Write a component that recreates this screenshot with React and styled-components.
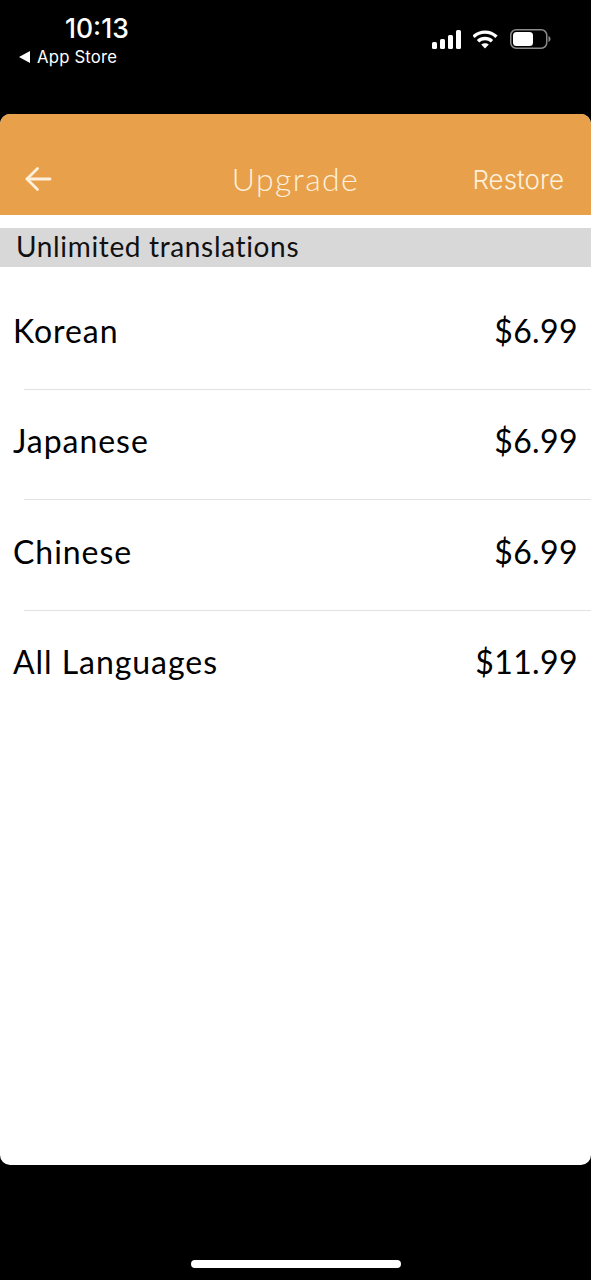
import React from "react";
import styled, { createGlobalStyle } from "styled-components";

const GlobalStyle = createGlobalStyle`
  html, body {
    margin: 0;
    padding: 0;
    background: #000;
  }
  * {
    box-sizing: border-box;
  }
`;

const Screen = styled.div`
  width: 591px;
  height: 1280px;
  background: #000;
  display: flex;
  flex-direction: column;
  overflow: hidden;
`;

const StatusBar = styled.div`
  height: 114px;
  flex: none;
  display: flex;
  justify-content: space-between;
  align-items: flex-start;
  color: #fff;
  font-family: "Inter", "Liberation Sans", sans-serif;
`;

const StatusLeft = styled.div`
  display: flex;
  flex-direction: column;
  align-items: flex-start;
  padding: 13px 0 0 19px;
`;

const Time = styled.div`
  font-size: 26.500px;
  font-weight: 500;
  line-height: 30px;
  margin-left: 46px;
`;

const BackToStore = styled.div`
  display: flex;
  align-items: center;
  gap: 7px;
  font-size: 16.700px;
  line-height: 20px;
  margin-top: 4px;
  letter-spacing: 0.2px;
`;

const StatusIcons = styled.div`
  display: flex;
  align-items: center;
  gap: 11px;
  padding: 29px 40px 0 0;
`;

const Sheet = styled.div`
  height: 1051px;
  flex: none;
  background: #fff;
  border-radius: 10px;
  overflow: hidden;
`;

const Header = styled.div`
  height: 101px;
  background: #e8a04b;
  color: #fdf0dc;
  display: grid;
  grid-template-columns: 1fr auto 1fr;
  align-items: center;
  padding: 28px 27px 0 24px;
`;

const BackButton = styled.button`
  display: flex;
  padding: 0;
  border: 0;
  background: none;
  color: inherit;
`;

const Title = styled.div`
  font-family: "Lato", "Liberation Sans", sans-serif;
  font-weight: 300;
  font-size: 32px;
  letter-spacing: 1.400px;
  margin: -1px 0 0 3px;
`;

const RestoreButton = styled.button`
  justify-self: end;
  padding: 0;
  border: 0;
  background: none;
  color: inherit;
  font-family: "Inter", "Liberation Sans", sans-serif;
  font-size: 26px;
  font-weight: 300;
  margin-top: 2px;
`;

const SectionTitle = styled.div`
  height: 39px;
  margin-top: 13px;
  padding-left: 16px;
  background: #d8d8d8;
  color: #111;
  font-family: "Lato", "Liberation Sans", sans-serif;
  font-size: 28px;
  letter-spacing: 0.650px;
  line-height: 37px;
`;

const List = styled.div`
  padding-top: 12px;
`;

const Row = styled.div`
  height: 110.500px;
  display: flex;
  justify-content: space-between;
  align-items: center;
  padding: 0 13px 8px;
  position: relative;
  color: #000;
  font-family: "Lato", "Liberation Sans", sans-serif;
  font-size: 32px;
  letter-spacing: 0.950px;

  &:not(:last-child)::after {
    content: "";
    position: absolute;
    left: 24px;
    right: 0;
    bottom: 0;
    height: 1px;
    background: #e2e2e2;
  }
`;

const Price = styled.span`
  letter-spacing: 0.400px;
`;

const HomeArea = styled.div`
  flex: 1;
  display: flex;
  justify-content: center;
  align-items: flex-end;
  padding-bottom: 12px;
`;

const HomeIndicator = styled.div`
  width: 210px;
  height: 8px;
  border-radius: 4px;
  background: #fff;
`;

const SignalIcon = () => (
  <svg width="30" height="19" viewBox="0 0 30 19" fill="#fff">
    <rect x="0" y="12" width="5" height="7" rx="1.500" />
    <rect x="8" y="9" width="5" height="10" rx="1.500" />
    <rect x="16" y="5" width="5" height="14" rx="1.500" />
    <rect x="24" y="0" width="5" height="19" rx="1.500" />
  </svg>
);

const WifiIcon = () => (
  <svg width="26" height="19" viewBox="0 0 26 19" fill="none" stroke="#fff" strokeWidth="3.400">
    <path d="M0.500 6.800C7 .6 17 .6 23.500 6.800" />
    <path d="M5 11.200c4-3.700 10-3.700 14 0" />
    <path d="M12 18.500l-3.800-4c2.200-1.800 5.400-1.800 7.600 0z" fill="#fff" stroke="none" />
  </svg>
);

const BatteryIcon = () => (
  <svg width="41" height="20" viewBox="0 0 41 20">
    <rect x="0.750" y="0.750" width="36" height="18.500" rx="5.500" fill="none" stroke="#8a8a8a" strokeWidth="1.500" />
    <rect x="3" y="3" width="20" height="14" rx="3.500" fill="#fff" />
    <path d="M38.500 7v6c1.300-.5 2-1.700 2-3s-.7-2.500-2-3z" fill="#8a8a8a" />
  </svg>
);

const ArrowIcon = () => (
  <svg width="28" height="26" viewBox="0 0 28 26" fill="none" stroke="currentColor" strokeWidth="2.800" strokeLinecap="round" strokeLinejoin="round">
    <path d="M26 13H3" />
    <path d="M13.500 2.500L3 13l10.500 10.500" />
  </svg>
);

const products = [
  { name: "Korean", price: "$6.99" },
  { name: "Japanese", price: "$6.99" },
  { name: "Chinese", price: "$6.99" },
  { name: "All Languages", price: "$11.99" },
];

function App() {
  return (
    <Screen>
      <GlobalStyle />
      <StatusBar>
        <StatusLeft>
          <Time>10:13</Time>
          <BackToStore>
            <svg width="11" height="12" viewBox="0 0 11 12" fill="#fff">
              <path d="M0 6l11-6v12z" />
            </svg>
            App Store
          </BackToStore>
        </StatusLeft>
        <StatusIcons>
          <SignalIcon />
          <WifiIcon />
          <BatteryIcon />
        </StatusIcons>
      </StatusBar>
      <Sheet>
        <Header>
          <BackButton>
            <ArrowIcon />
          </BackButton>
          <Title>Upgrade</Title>
          <RestoreButton>Restore</RestoreButton>
        </Header>
        <SectionTitle>Unlimited translations</SectionTitle>
        <List>
          {products.map((product) => (
            <Row key={product.name}>
              <span>{product.name}</span>
              <Price>{product.price}</Price>
            </Row>
          ))}
        </List>
      </Sheet>
      <HomeArea>
        <HomeIndicator />
      </HomeArea>
    </Screen>
  );
}

export default App;
